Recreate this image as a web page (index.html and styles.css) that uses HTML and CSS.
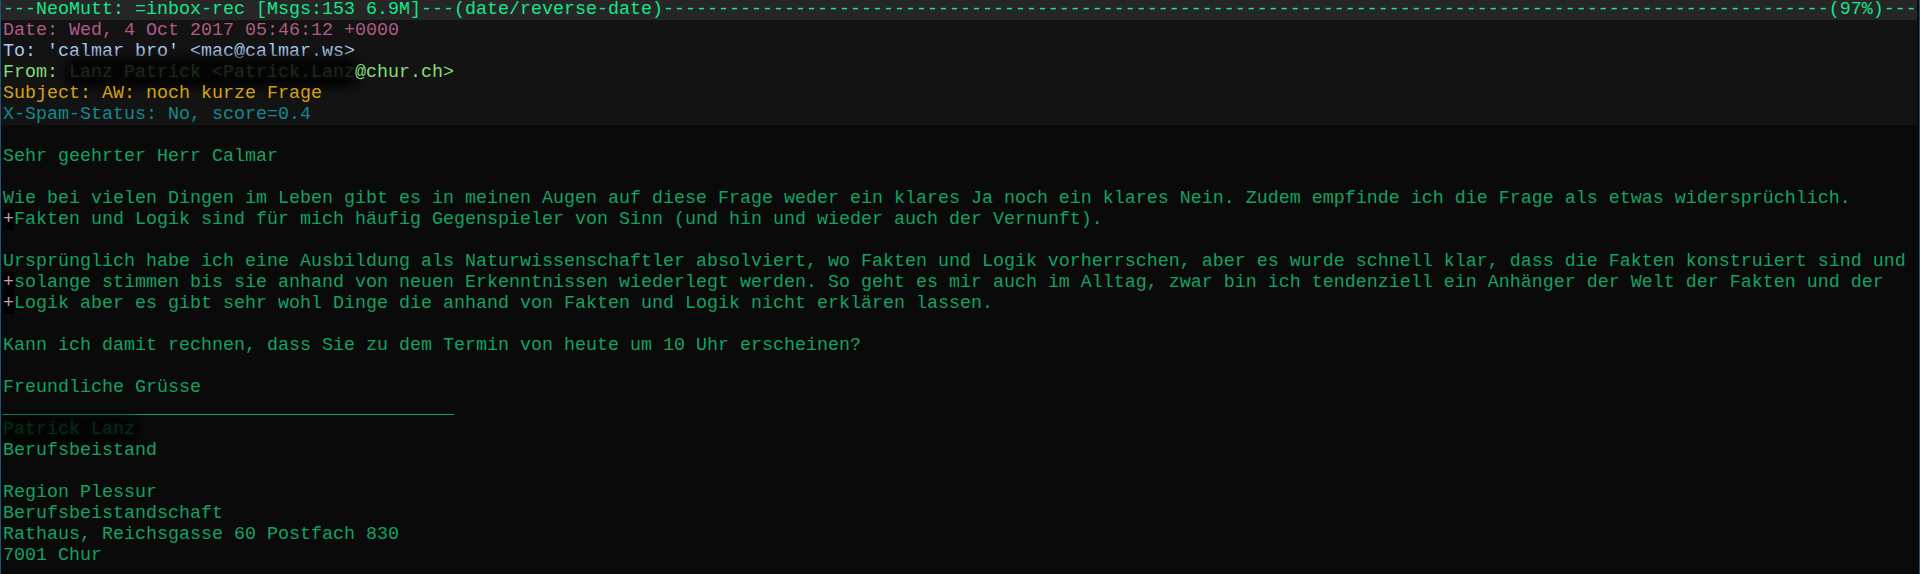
FILE: index.html
```html
<!DOCTYPE html>
<html lang="de">
<head>
<meta charset="utf-8">
<title>NeoMutt</title>
<link rel="stylesheet" href="styles.css">
</head>
<body>
<div class="term">
  <div class="status">---NeoMutt: =inbox-rec [Msgs:153 6.9M]---(date/reverse-date)----------------------------------------------------------------------------------------------------------(97%)---</div>
  <div class="headers">
    <div class="line h-date">Date: Wed, 4 Oct 2017 05:46:12 +0000</div>
    <div class="line h-to">To: 'calmar bro' &lt;mac@calmar.ws&gt;</div>
    <div class="line h-from">From: <span class="redact">Lanz Patrick &lt;Patrick.Lanz</span>@chur.ch&gt;</div>
    <div class="line h-subj">Subject: AW: noch kurze Frage</div>
    <div class="line h-spam">X-Spam-Status: No, score=0.4</div>
  </div>
  <div class="body">
    <div class="line">&nbsp;</div>
    <div class="line">Sehr geehrter Herr Calmar</div>
    <div class="line">&nbsp;</div>
    <div class="line">Wie bei vielen Dingen im Leben gibt es in meinen Augen auf diese Frage weder ein klares Ja noch ein klares Nein. Zudem empfinde ich die Frage als etwas widersprüchlich.</div>
    <div class="line"><span class="plus">+</span>Fakten und Logik sind für mich häufig Gegenspieler von Sinn (und hin und wieder auch der Vernunft).</div>
    <div class="line">&nbsp;</div>
    <div class="line">Ursprünglich habe ich eine Ausbildung als Naturwissenschaftler absolviert, wo Fakten und Logik vorherrschen, aber es wurde schnell klar, dass die Fakten konstruiert sind und</div>
    <div class="line"><span class="plus">+</span>solange stimmen bis sie anhand von neuen Erkenntnissen wiederlegt werden. So geht es mir auch im Alltag, zwar bin ich tendenziell ein Anhänger der Welt der Fakten und der</div>
    <div class="line"><span class="plus">+</span>Logik aber es gibt sehr wohl Dinge die anhand von Fakten und Logik nicht erklären lassen.</div>
    <div class="line">&nbsp;</div>
    <div class="line">Kann ich damit rechnen, dass Sie zu dem Termin von heute um 10 Uhr erscheinen?</div>
    <div class="line">&nbsp;</div>
    <div class="line">Freundliche Grüsse</div>
    <div class="line">_________________________________________</div>
    <div class="line"><span class="redact-sig">Patrick Lanz</span></div>
    <div class="line">Berufsbeistand</div>
    <div class="line">&nbsp;</div>
    <div class="line">Region Plessur</div>
    <div class="line">Berufsbeistandschaft</div>
    <div class="line">Rathaus, Reichsgasse 60 Postfach 830</div>
    <div class="line">7001 Chur</div>
  </div>
</div>
</body>
</html>
```
FILE: styles.css
```css
html, body {
  margin: 0;
  padding: 0;
  background: #0a0a0a;
  overflow: hidden;
}

.term {
  width: 1920px;
  height: 574px;
  box-sizing: border-box;
  border-left: 1px solid #1d5578;
  border-right: 1px solid #1d5578;
  padding-right: 2px;
  font-family: "Liberation Mono", "DejaVu Sans Mono", monospace;
  font-size: 18.33px;
  line-height: 21px;
  color: #12a262;
  background: #0a0a0a;
  overflow: hidden;
}

.status {
  margin-top: -1px;
  height: 21px;
  padding-left: 2px;
  background: #262626;
  color: #16e58a;
  white-space: pre;
}

.headers {
  background: #131313;
  padding-left: 2px;
}

.body {
  padding-left: 2px;
}

.line {
  height: 21px;
  white-space: pre;
}

.h-date { color: #b05a86; }
.h-to { color: #aac8ec; }
.h-from { color: #86dc78; }
.h-subj { color: #d3a214; }
.h-spam { color: #128a8c; }

.redact {
  color: #1a2a18;
  text-shadow: 0 0 4px #0c140c;
  background: rgba(0, 0, 0, 0.7);
  box-shadow: 0 0 9px 6px rgba(0, 0, 0, 0.7);
  border-radius: 10px;
}

.redact-sig {
  color: #082a18;
  text-shadow: 0 0 4px #051a0e;
  background: rgba(0, 0, 0, 0.6);
  box-shadow: 0 0 8px 4px rgba(0, 0, 0, 0.6);
  border-radius: 8px;
}

.plus {
  color: #c4a4a4;
  background: #000000;
}
```
